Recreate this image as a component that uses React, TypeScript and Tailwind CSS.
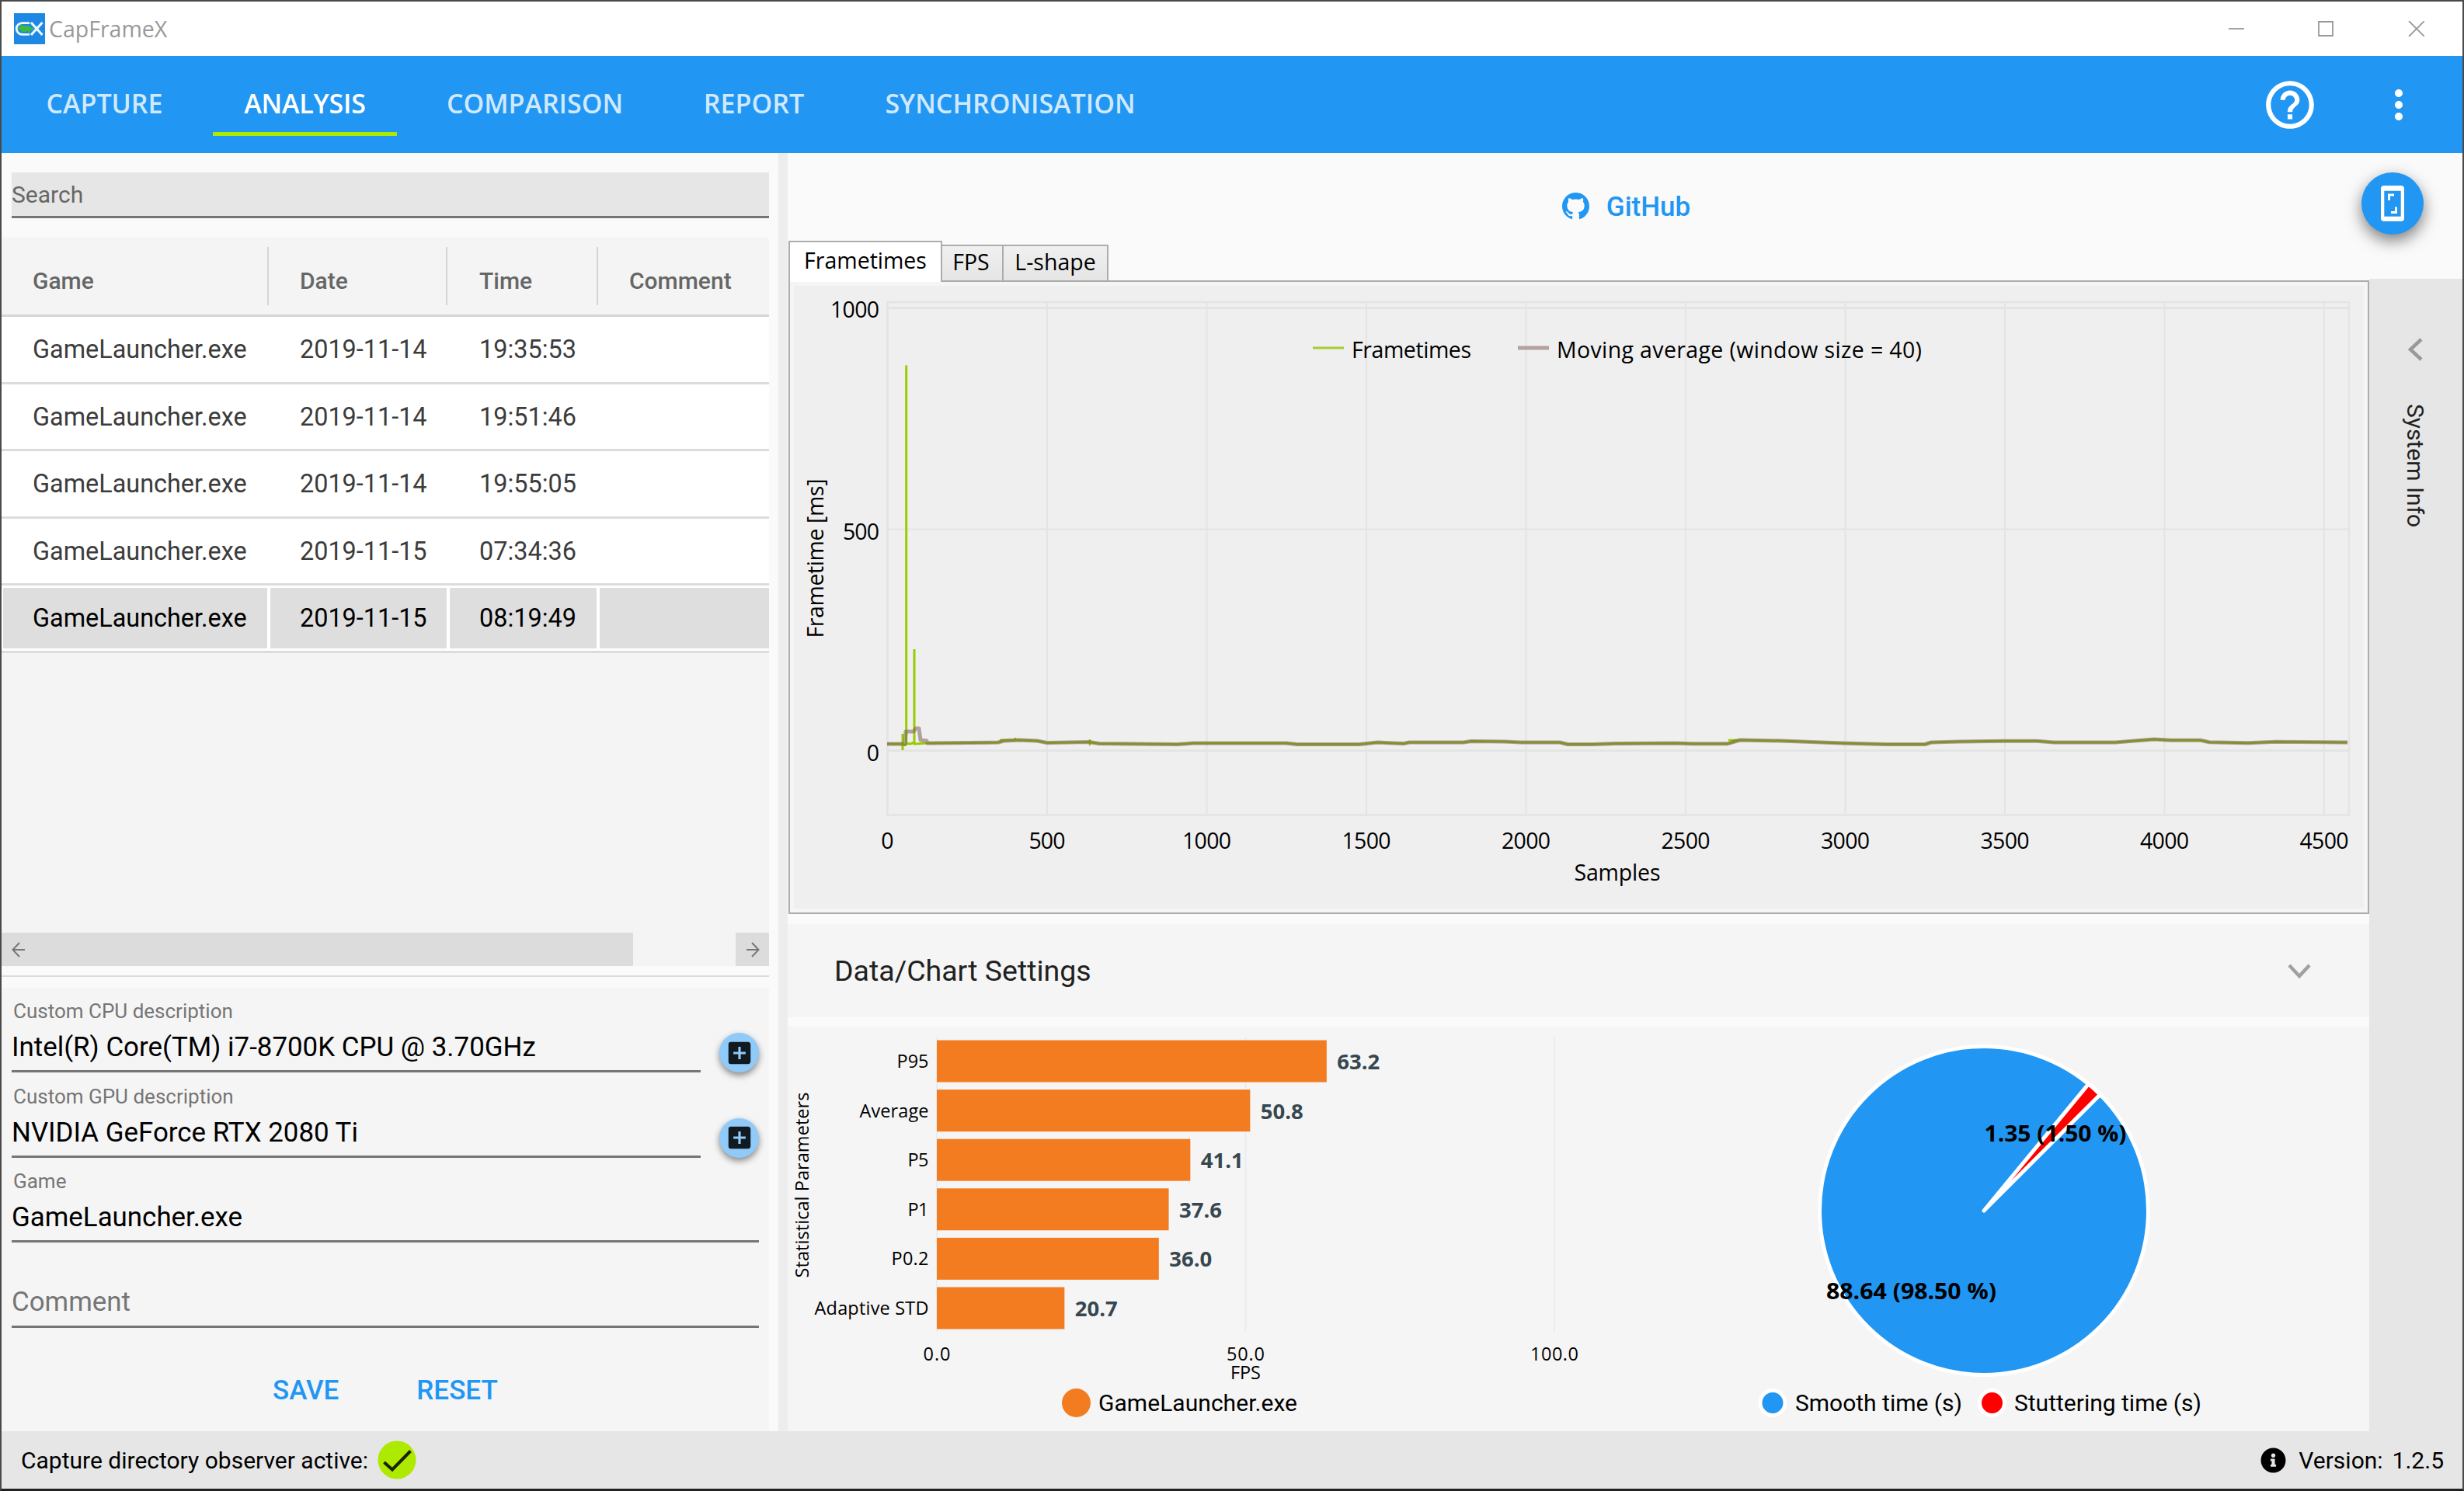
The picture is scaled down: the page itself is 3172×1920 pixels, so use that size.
import { FaInfoCircle } from 'react-icons/fa';
import { MdAddBox, MdHelpOutline, MdMoreVert } from 'react-icons/md';

const navItems = ['CAPTURE', 'ANALYSIS', 'COMPARISON', 'REPORT', 'SYNCHRONISATION'];

const records = [
  { game: 'GameLauncher.exe', date: '2019-11-14', time: '19:35:53' },
  { game: 'GameLauncher.exe', date: '2019-11-14', time: '19:51:46' },
  { game: 'GameLauncher.exe', date: '2019-11-14', time: '19:55:05' },
  { game: 'GameLauncher.exe', date: '2019-11-15', time: '07:34:36' },
  { game: 'GameLauncher.exe', date: '2019-11-15', time: '08:19:49' },
];

const stats = [
  { label: 'P95', value: 63.2, width: 41 },
  { label: 'Average', value: 50.8, width: 89 },
  { label: 'P5', value: 41.1, width: 27 },
  { label: 'P1', value: 37.6, width: 27 },
  { label: 'P0.2', value: 36.0, width: 48 },
  { label: 'Adaptive STD', value: 20.7, width: 147 },
];

const samples = [0, 500, 1000, 1500, 2000, 2500, 3000, 3500, 4000, 4500];

// moving average after the loading spikes, in chart pixels
const averageTail =
  '172,589 263,588 270,586 290,585 313,586 326,588.5 380,587.5 393,589.5 494,590.5 514,589 634,589 648,590.5 728,590.5 751,588 785,589.5 792,588 862,588 872,586.5 915,587 936,588 986,588 996,590.5 1028,590.5 1057,589.5 1135,589 1157,589.7 1202,589.7 1218,585 1271,586 1350,589 1407,590.5 1456,590.5 1464,588 1500,587 1558,586.3 1600,586.3 1622,588 1701,588 1751,584 1772,585.3 1811,585.3 1822,587.7 1872,588.7 1908,587.3 2000,588';

function Logo() {
  return (
    <svg width="40" height="40" viewBox="0 0 40 40" fill="none">
      <rect width="40" height="40" fill="#1e88e5" />
      <path d="M5 20h3l1-3 1.5 5 1.5-6 1.5 8 1.5-7 1.5 6 1.5-7 1.5 7 1.5-4 1 1h3" stroke="#3dbb3d" strokeWidth="2.6" />
      <path d="M20 12.7H10.5a7.3 7.3 0 0 0 0 14.6H20" stroke="#eef7ff" strokeWidth="2.8" />
      <path d="M22 12L36.5 28M36.5 12L22 28" stroke="#eef7ff" strokeWidth="3.2" />
    </svg>
  );
}

function GithubMark() {
  return (
    <svg width="35" height="35" viewBox="0 0 16 16" fill="currentColor">
      <path d="M8 0C3.58 0 0 3.58 0 8c0 3.54 2.29 6.53 5.47 7.59.4.07.55-.17.55-.38 0-.19-.01-.82-.01-1.49-2.01.37-2.53-.49-2.69-.94-.09-.23-.48-.94-.82-1.13-.28-.15-.68-.52-.01-.53.63-.01 1.08.58 1.23.82.72 1.21 1.87.87 2.33.66.07-.52.28-.87.51-1.07-1.78-.2-3.64-.89-3.64-3.95 0-.87.31-1.59.82-2.15-.08-.2-.36-1.02.08-2.12 0 0 .67-.21 2.2.82.64-.18 1.32-.27 2-.27s1.36.09 2 .27c1.53-1.04 2.2-.82 2.2-.82.44 1.1.16 1.92.08 2.12.51.56.82 1.27.82 2.15 0 3.07-1.87 3.75-3.65 3.95.29.25.54.73.54 1.48 0 1.07-.01 1.93-.01 2.2 0 .21.15.46.55.38A8.01 8.01 0 0 0 16 8c0-4.42-3.58-8-8-8z" />
    </svg>
  );
}

function TitleBar() {
  return (
    <div className="flex h-[70px] shrink-0 items-center justify-between bg-white pl-4 pr-[49px]">
      <div className="flex items-center gap-[5px]">
        <Logo />
        <span className="font-['Open_Sans',sans-serif] text-[28.5px] text-[#999]">CapFrameX</span>
      </div>
      <svg width="252" height="20" viewBox="0 0 252 20" fill="none" stroke="#999" strokeWidth="1.8">
        <path d="M0 10h20" />
        <path d="M116 1h18v18h-18z" />
        <path d="M232 0l20 20M252 0l-20 20" />
      </svg>
    </div>
  );
}

function Navbar() {
  return (
    <nav className="flex h-[125px] shrink-0 items-center justify-between bg-[#2196f3] pl-[17px] pr-[52px] text-white">
      <div className="grid h-full grid-cols-[231px_237px_307px_209px_403px] gap-x-6 font-['Open_Sans',sans-serif] text-[34px] font-semibold">
        {navItems.map((item) => (
          <div key={item} className="flex flex-col items-center">
            <span
              className={
                item === 'ANALYSIS'
                  ? 'flex h-[98px] items-center pt-[24px] tracking-[-0.2px]'
                  : 'flex h-[98px] items-center pt-[24px] text-[#d0e9fd]'
              }
            >
              {item}
            </span>
            {item === 'ANALYSIS' && <span className="h-[5px] w-full bg-[#aeea00]" />}
          </div>
        ))}
      </div>
      <div className="flex items-center gap-[73px]">
        <MdHelpOutline size={74} />
        <MdMoreVert size={60} />
      </div>
    </nav>
  );
}

function RecordTable() {
  return (
    <div className="mr-3 flex h-[938px] flex-col bg-[#f4f4f4]">
      <div className="flex h-[102px] shrink-0 items-center border-b-[3px] border-[#d5d5d5] text-[30px] font-medium text-[#666]">
        <div className="h-[75px] w-[344px] border-r-2 border-[#d5d5d5] pl-[40px] pt-[6px] leading-[75px]">Game</div>
        <div className="h-[75px] w-[230px] border-r-2 border-[#d5d5d5] pl-[40px] pt-[6px] leading-[75px]">Date</div>
        <div className="h-[75px] w-[194px] border-r-2 border-[#d5d5d5] pl-[41px] pt-[6px] leading-[75px]">Time</div>
        <div className="h-[75px] pl-[40px] pt-[6px] leading-[75px]">Comment</div>
      </div>
      {records.map((r, i) => {
        const selected = i === records.length - 1;
        return (
          <div
            key={r.time}
            className={
              selected
                ? 'grid h-[86.5px] shrink-0 grid-cols-[340px_227px_189px_218px] gap-x-1 border-b-[3px] border-[#dcdcdc] bg-white pb-[3px] pl-[2px] pt-[3px] text-black'
                : 'grid h-[86.5px] shrink-0 grid-cols-[340px_227px_189px_218px] gap-x-1 border-b-[3px] border-[#dcdcdc] bg-white pb-[3px] pl-[2px] pt-[3px] text-[#3c3c3c]'
            }
          >
            {[r.game, r.date, r.time, ''].map((cell, c) => (
              <div
                key={c}
                className={
                  selected
                    ? 'flex items-center bg-[#dedede] pl-[38px] pt-[2px] text-[32.4px]'
                    : 'flex items-center pl-[38px] pt-[2px] text-[32.4px]'
                }
              >
                {cell}
              </div>
            ))}
          </div>
        );
      })}
      <div className="mt-auto flex h-[43px] justify-between text-[#777]">
        <div className="flex w-[813px] items-center bg-[#dcdcdc] pl-[13px]">
          <svg width="18" height="22" viewBox="0 0 18 22" fill="none" stroke="currentColor" strokeWidth="2">
            <path d="M17 11H2M10 2L1.5 11L10 20" />
          </svg>
        </div>
        <div className="flex w-[43px] items-center justify-center bg-[#dcdcdc]">
          <svg width="18" height="22" viewBox="0 0 18 22" fill="none" stroke="currentColor" strokeWidth="2">
            <path d="M1 11H16M8 2L16.5 11L8 20" />
          </svg>
        </div>
      </div>
    </div>
  );
}

function Field({ label, value, addable }: { label?: string; value: string; addable?: boolean }) {
  return (
    <div className="flex h-[109.5px] justify-between pl-[13px] pr-[13px] pt-[18px]">
      <div className={addable ? 'w-[887px]' : 'w-[962px]'}>
        <div className="h-6 pl-[2px] text-[26px] leading-6 text-[#757575]">{label}</div>
        <div
          className={
            label
              ? 'h-[67px] border-b-[3px] border-[#757575] pt-[5px] text-[34.9px] leading-[59px] text-black'
              : 'h-[67px] border-b-[3px] border-[#757575] pt-[4px] text-[34.9px] leading-[59px] text-[#757575]'
          }
        >
          {value}
        </div>
      </div>
      {addable && (
        <button className="mt-[40px] flex h-[51px] w-[51px] items-center justify-center rounded-full bg-[#90caf9] text-[#111a20] shadow-[0_4px_8px_rgba(0,0,0,0.45)]">
          <MdAddBox size={38} />
        </button>
      )}
    </div>
  );
}

function Sidebar() {
  return (
    <aside className="flex w-[1000px] shrink-0 flex-col bg-[#fafafa]">
      <div className="mb-[25px] ml-[13px] mt-[25px] h-[59px] w-[975px] border-b-[3px] border-[#757575] bg-[#e6e6e6] text-[30px] leading-[57px] text-[#666]">
        Search
      </div>
      <RecordTable />
      <div className="mb-[14px] mr-3 mt-[12px] h-[2px] bg-[#dcdcdc]" />
      <div className="mr-3 flex-1 bg-[#f5f5f5]">
        <Field label="Custom CPU description" value="Intel(R) Core(TM) i7-8700K CPU @ 3.70GHz" addable />
        <Field label="Custom GPU description" value="NVIDIA GeForce RTX 2080 Ti" addable />
        <Field label="Game" value="GameLauncher.exe" />
        <Field value="Comment" />
        <div className="flex gap-[100px] pl-[349px] pt-[53px] text-[35px] font-medium leading-[56px] text-[#2196f3]">
          <span>SAVE</span>
          <span>RESET</span>
        </div>
      </div>
    </aside>
  );
}

function FrametimeChart() {
  return (
    <svg
      width="2021"
      height="802"
      viewBox="0 0 2021 802"
      className="bg-[#efefef] font-['Open_Sans',sans-serif] text-[28.5px]"
    >
      <g stroke="#e4e4e4" fill="none" strokeWidth="2">
        {samples.map((s, i) => (
          <path key={s} d={`M${120.5 + i * 205.5} 21V681`} />
        ))}
        <path d="M120 313.5H2002" />
        <path d="M120 28.5H2002M120 598.5H2002" strokeWidth="3" />
        <path d="M120.5 21H2002V681.5H120.5z" strokeWidth="2.5" />
      </g>
      {samples.map((s, i) => {
        const w = s === 0 ? 16 : s < 1000 ? 47 : 63;
        return (
          <text key={s} x={120.5 + i * 205.5} y="724.5" textAnchor="middle" textLength={w}>
            {s}
          </text>
        );
      })}
      <text x="110" y="41" textAnchor="end" textLength="63">1000</text>
      <text x="110" y="327" textAnchor="end" textLength="47">500</text>
      <text x="110" y="611.5" textAnchor="end" textLength="16">0</text>
      <text x="1060" y="766" textAnchor="middle" textLength="111">Samples</text>
      <text transform="translate(38 351) rotate(-90)" textAnchor="middle" textLength="205">Frametime [ms]</text>

      <path d="M120 590H140V598M140 577V590L144 592M144.7 592V102.5V589L150 590L155 588V468V590L172 589" stroke="#99cc00" strokeWidth="3" fill="none" />
      <polyline points={averageTail} stroke="#99cc00" strokeWidth="3" fill="none" />
      <path d="M265 585h20M381 584v8M285 582v4M1203 585h12" stroke="#99cc00" strokeWidth="2.5" />
      <polyline
        points={`120,590 143,590 144,574 154,574 157,570 161,570 163,585 171,586 ${averageTail}`}
        stroke="#725454"
        strokeOpacity="0.5"
        strokeWidth="5"
        strokeLinejoin="round"
        fill="none"
      />

      <path d="M668 80H708" stroke="#a4cf30" strokeWidth="3" />
      <text x="718" y="93" textLength="154">Frametimes</text>
      <path d="M932 80H972" stroke="#b3a2a1" strokeWidth="5" />
      <text x="982" y="93" textLength="470">Moving average (window size = 40)</text>
    </svg>
  );
}

function ChartTabs() {
  return (
    <div className="ml-px flex w-[2035px] flex-col">
      <div className="flex h-[51px] items-end font-['Open_Sans',sans-serif] text-[28.5px] text-black">
        <div className="z-10 -mb-[2px] h-[53px] w-[198px] border-2 border-b-0 border-[#acacac] bg-white text-center leading-[46px]">
          Frametimes
        </div>
        <div className="h-[46px] w-[79px] border-2 border-b-0 border-l-0 border-[#acacac] bg-linear-to-b from-[#f0f0f0] to-[#e5e5e5] pr-[3px] text-center leading-[41px]">
          FPS
        </div>
        <div className="h-[46px] w-[135px] border-2 border-b-0 border-l-0 border-[#acacac] bg-linear-to-b from-[#f0f0f0] to-[#e5e5e5] text-center leading-[41px]">
          L-shape
        </div>
      </div>
      <div className="h-[816px] border-2 border-[#acacac] bg-[#f5f5f5] px-[5px] py-[5px]">
        <FrametimeChart />
      </div>
    </div>
  );
}

function StatsChart() {
  return (
    <svg width="1020" height="521" viewBox="0 0 1020 521" className="font-['Open_Sans',sans-serif]">
      <path d="M192 14V393M589.5 14V393M987 14V393" stroke="#ececec" strokeWidth="2" />
      <g className="text-[23.5px]">
        {stats.map((s, i) => (
          <text key={s.label} x="181.5" y={53 + i * 63.6} textAnchor="end" textLength={s.width}>
            {s.label}
          </text>
        ))}
        <text x="192" y="429.5" textAnchor="middle" textLength="35">0.0</text>
        <text x="589.5" y="429.5" textAnchor="middle" textLength="49">50.0</text>
        <text x="987" y="429.5" textAnchor="middle" textLength="62">100.0</text>
        <text x="589.5" y="454" textAnchor="middle" textLength="39">FPS</text>
        <text transform="translate(27 204) rotate(-90)" textAnchor="middle" textLength="239">Statistical Parameters</text>
      </g>
      {stats.map((s, i) => (
        <g key={s.label}>
          <rect x="192" y={17.5 + i * 63.6} width={s.value * 7.94} height="54" fill="#f37c20" />
          <text
            x={205.5 + s.value * 7.94}
            y={55 + i * 63.6}
            textLength="55"
            lengthAdjust="spacingAndGlyphs"
            fill="#37474f"
            className="text-[27.5px] font-bold"
          >
            {s.value.toFixed(1)}
          </text>
        </g>
      ))}
      <circle cx="371.5" cy="484.5" r="18.5" fill="#f37c20" />
      <text x="400" y="494.5" textLength="256" className="font-['Roboto',sans-serif] text-[30px]">
        GameLauncher.exe
      </text>
    </svg>
  );
}

function StutterPie() {
  return (
    <svg width="1016" height="521" viewBox="0 0 1016 521" className="font-['Roboto',sans-serif] text-[30px]">
      <g stroke="#fff" strokeWidth="5" strokeLinejoin="round">
        <circle cx="520" cy="237" r="211.5" fill="#2196f3" />
        <path d="M520 237L654.6 73.9A211.5 211.5 0 0 1 669.6 87.4Z" fill="#f00" />
        <circle cx="248" cy="484.5" r="16" fill="#2196f3" />
        <circle cx="530.5" cy="484.5" r="16" fill="#f00" />
      </g>
      <g className="font-['Open_Sans',sans-serif] text-[28px] font-bold">
        <text x="520.5" y="148" textLength="183" lengthAdjust="spacingAndGlyphs">
          1.35 (1.50 %)
        </text>
        <text x="317" y="351" textLength="219" lengthAdjust="spacingAndGlyphs">
          88.64 (98.50 %)
        </text>
      </g>
      <text x="277" y="494.5" textLength="215">Smooth time (s)</text>
      <text x="559" y="494.5" textLength="241">Stuttering time (s)</text>
    </svg>
  );
}

function AnalysisView() {
  return (
    <main className="flex w-[2036px] shrink-0 flex-col bg-[#fafafa]">
      <div className="flex h-[113px] items-center justify-center gap-[22px] pl-[123px] pt-[24px] text-[35px] font-medium text-[#2196f3]">
        <GithubMark />
        <span className="pt-[3px]">GitHub</span>
      </div>
      <ChartTabs />
      <div className="mt-[13px] flex h-[120px] items-center justify-between bg-[#f5f5f5] pl-[60px] pr-[74px]">
        <span className="text-[37.5px] text-[#212121]">Data/Chart Settings</span>
        <svg width="32" height="20" viewBox="0 0 32 20" fill="none" stroke="#a0a0a0" strokeWidth="4.5" className="mt-[2px]">
          <path d="M3 2L16 16L29 2" />
        </svg>
      </div>
      <div className="mt-3 flex flex-1 bg-[#f5f5f5]">
        <StatsChart />
        <StutterPie />
      </div>
    </main>
  );
}

function SystemInfo() {
  return (
    <div className="relative flex flex-1 flex-col bg-[#fafafa] pt-[162px]">
      <button className="absolute -left-[10px] top-[25px] flex h-20 w-20 items-center justify-center rounded-full bg-[#2196f3] shadow-[0_8px_20px_rgba(0,0,0,0.5)]">
        <svg width="30" height="46" viewBox="0 0 30 46" fill="#fff">
          <path fillRule="evenodd" d="M4 0h22a4 4 0 0 1 4 4v38a4 4 0 0 1-4 4H4a4 4 0 0 1-4-4V4a4 4 0 0 1 4-4zM4.3 6.7v33h21.4v-33z" />
          <path d="M9 10.5h8v3h-5v5.5h-3zM21 36h-8v-3h5v-5.5h3z" />
        </svg>
      </button>
      <div className="flex flex-1 flex-col items-center bg-[#e6e6e6] pt-[75px]">
        <svg width="20" height="32" viewBox="0 0 20 32" fill="none" stroke="#999" strokeWidth="4.5" className="mr-[2px]">
          <path d="M18 3L4 16L18 29" />
        </svg>
        <span className="mr-[3px] mt-[54px] text-[30px] leading-[36px] text-[#212121] [writing-mode:vertical-rl]">
          System Info
        </span>
      </div>
    </div>
  );
}

function StatusBar() {
  return (
    <footer className="flex h-[74px] shrink-0 items-center justify-between bg-[#e6e6e6] pl-[25px] pr-[24px] text-[30px] text-black">
      <div className="flex items-center gap-[12px]">
        <span>Capture directory observer active:</span>
        <svg width="50" height="50" viewBox="0 0 50 50" fill="none">
          <circle cx="25" cy="25" r="24.5" fill="#aeea00" />
          <path d="M8.5 28L19 37.5L42.5 13.5" stroke="#1a2300" strokeWidth="4" />
        </svg>
      </div>
      <div className="flex items-center">
        <FaInfoCircle size={33} />
        <span className="ml-[16px]">Version:</span>
        <span className="ml-[12px]">1.2.5</span>
      </div>
    </footer>
  );
}

export default function App() {
  return (
    <div className="flex h-[1920px] w-[3172px] flex-col overflow-hidden border-2 border-b-[3px] border-[#4a4a4a] border-b-[#222] bg-[#fafafa] font-['Roboto',sans-serif]">
      <TitleBar />
      <Navbar />
      <div className="flex h-[1646px] shrink-0">
        <Sidebar />
        <div className="w-3 shrink-0 bg-[#ededed]" />
        <AnalysisView />
        <SystemInfo />
      </div>
      <StatusBar />
    </div>
  );
}
